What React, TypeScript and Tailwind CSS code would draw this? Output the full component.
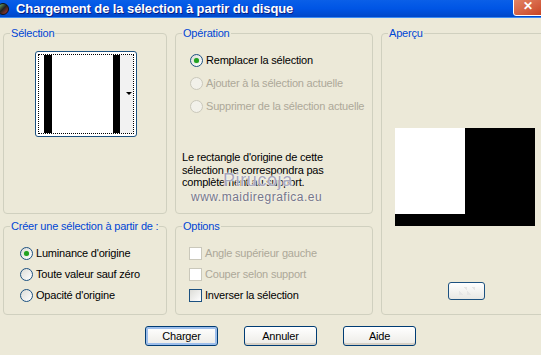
import React from 'react';

const font = { fontFamily: '"Liberation Sans", Arial, sans-serif' };

function Group({ title, className, children }: { title: string; className?: string; children?: React.ReactNode }) {
  return (
    <div className={`relative rounded-[4px] border border-[#D0D0BF] ${className ?? ''}`}>
      <span className="absolute -top-[8px] left-[6px] whitespace-nowrap bg-[#ECE9D8] px-[1px] text-[11px] leading-[14px] text-[#0046D5]">
        {title}
      </span>
      {children}
    </div>
  );
}

function Radio({ label, checked, disabled }: { label: string; checked?: boolean; disabled?: boolean }) {
  return (
    <div className="flex h-[13px] items-center gap-[3px]">
      <span
        className={`flex h-[13px] w-[13px] items-center justify-center rounded-full border ${
          disabled ? 'border-[#CAC8BB] bg-[#F2F1EA]' : 'border-[#1C5180] bg-gradient-to-br from-[#DCDCD7] to-white'
        }`}
      >
        {checked && <span className="h-[5px] w-[5px] rounded-full bg-[#21A121] shadow-[0_0_1px_#6CCB6C]" />}
      </span>
      <span className={`whitespace-nowrap text-[11px] leading-[13px] ${disabled ? 'text-[#ACA899]' : 'text-black'}`}>{label}</span>
    </div>
  );
}

function Check({ label, disabled }: { label: string; disabled?: boolean }) {
  return (
    <div className="flex h-[13px] items-center gap-[3px]">
      <span
        className={`h-[13px] w-[13px] border ${
          disabled ? 'border-[#CAC8BB] bg-white' : 'border-[#1C5180] bg-gradient-to-br from-[#DCDCD7] to-white'
        }`}
      />
      <span className={`whitespace-nowrap text-[11px] leading-[13px] ${disabled ? 'text-[#ACA899]' : 'text-black'}`}>{label}</span>
    </div>
  );
}

function Button({ label, focused }: { label: string; focused?: boolean }) {
  return (
    <button
      className={`h-[20px] w-[73px] rounded-[3px] border border-[#003C74] bg-gradient-to-b from-white to-[#ECEBE6] text-[11px] text-black ${
        focused ? 'shadow-[inset_0_0_0_2px_#9DBEEB]' : 'shadow-[inset_0_-2px_0_#D6D0C5]'
      }`}
    >
      {label}
    </button>
  );
}

export default function App() {
  return (
    <div className="h-[355px] w-[541px] overflow-hidden bg-[#ECE9D8] tracking-[-0.2px]" style={font}>
      {/* Title bar */}
      <div className="relative flex h-[18px] items-center bg-gradient-to-b from-[#0A5FE8] via-[#0055E5] to-[#0047C8] border-b border-[#3C8CF5]">
        <span className="ml-[-3px] h-[12px] w-[12px] rounded-full bg-gradient-to-br from-[#7BD47B] via-[#222] to-[#C03030] border border-[#111]" />
        <span className="ml-[7px] text-[13px] font-bold leading-[16px] tracking-[-0.1px] text-white [text-shadow:1px_1px_0_#0A1E82]">
          Chargement de la sélection à partir du disque
        </span>
        <span className="absolute right-[-8px] top-[-4px] flex h-[20px] w-[36px] items-center justify-start rounded-[3px] border border-white bg-gradient-to-br from-[#E58A6C] to-[#C53A16] pl-[9px] text-[12px] font-bold text-white">
          ✕
        </span>
      </div>

      <div className="px-[3px] pt-[15px]">
        <div className="grid grid-cols-[164px_198px_1fr] gap-x-[8px]">
          <div className="flex flex-col gap-[12px]">
            <Group title="Sélection" className="h-[181px]">
              <div className="ml-[31px] mt-[17px] h-[86px] w-[102px] rounded-[3px] border border-[#1C5180] bg-white p-[2px]">
                <div className="flex h-full border border-dotted border-black">
                  <div className="w-[5px]" />
                  <div className="w-[8px] bg-black" />
                  <div className="flex-1" />
                  <div className="w-[7px] bg-black" />
                  <div className="flex w-[13px] items-center justify-end bg-[#F2F2F2] pr-[1px]">
                    <svg width="6" height="4" viewBox="0 0 6 4"><path d="M0 0h6L3 3z" fill="#000" /></svg>
                  </div>
                </div>
              </div>
            </Group>
            <Group title="Créer une sélection à partir de :" className="h-[89px]">
              <div className="flex flex-col gap-[8px] pl-[16px] pt-[20px]">
                <Radio label="Luminance d'origine" checked />
                <Radio label="Toute valeur sauf zéro" />
                <Radio label="Opacité d'origine" />
              </div>
            </Group>
          </div>

          <div className="flex flex-col gap-[12px]">
            <Group title="Opération" className="h-[181px]">
              <div className="flex flex-col gap-[10px] pl-[14px] pt-[20px]">
                <Radio label="Remplacer la sélection" checked />
                <Radio label="Ajouter à la sélection actuelle" disabled />
                <Radio label="Supprimer de la sélection actuelle" disabled />
              </div>
              <p className="mt-[38px] pl-[6px] text-[11px] leading-[12.5px] text-black">
                Le rectangle d'origine de cette
                <br />
                sélection ne correspondra pas
                <br />
                complètement au support.
              </p>
              {/* watermark */}
              <span className="pointer-events-none absolute left-[47px] top-[136px] text-[18px] leading-[20px] tracking-[0.6px] text-[#A6A6BC] [text-shadow:0_0_2px_#fff,0_0_1px_#fff]">
                Pirucoja
              </span>
              <span className="pointer-events-none absolute left-[15px] top-[157px] text-[12px] leading-[13px] tracking-[0.5px] text-[#76768A] [text-shadow:0_0_2px_#fff]">
                www.maidiregrafica.eu
              </span>
            </Group>
            <Group title="Options" className="h-[89px]">
              <div className="flex flex-col gap-[8px] pl-[13px] pt-[20px]">
                <Check label="Angle supérieur gauche" disabled />
                <Check label="Couper selon support" disabled />
                <Check label="Inverser la sélection" />
              </div>
            </Group>
          </div>

          <Group title="Aperçu" className="mr-[-8px] h-[282px]">
            <div className="ml-[13px] mt-[94px] flex h-[98px] w-[140px] flex-col bg-black">
              <div className="h-[86px] w-[70px] bg-white" />
            </div>
            <div className="ml-[66px] mt-[56px] flex h-[18px] w-[37px] items-center justify-center rounded-[3px] border border-[#1C5180] bg-gradient-to-b from-white to-[#E8E8E4]">
              <div className="h-[8px] w-[16px] bg-[linear-gradient(45deg,#e6e6e6_25%,transparent_25%,transparent_75%,#e6e6e6_75%)] bg-[length:8px_8px]" />
            </div>
          </Group>
        </div>

        <div className="mt-[11px] flex gap-[26px] pl-[142px]">
          <Button label="Charger" focused />
          <Button label="Annuler" />
          <Button label="Aide" />
        </div>
      </div>
    </div>
  );
}
